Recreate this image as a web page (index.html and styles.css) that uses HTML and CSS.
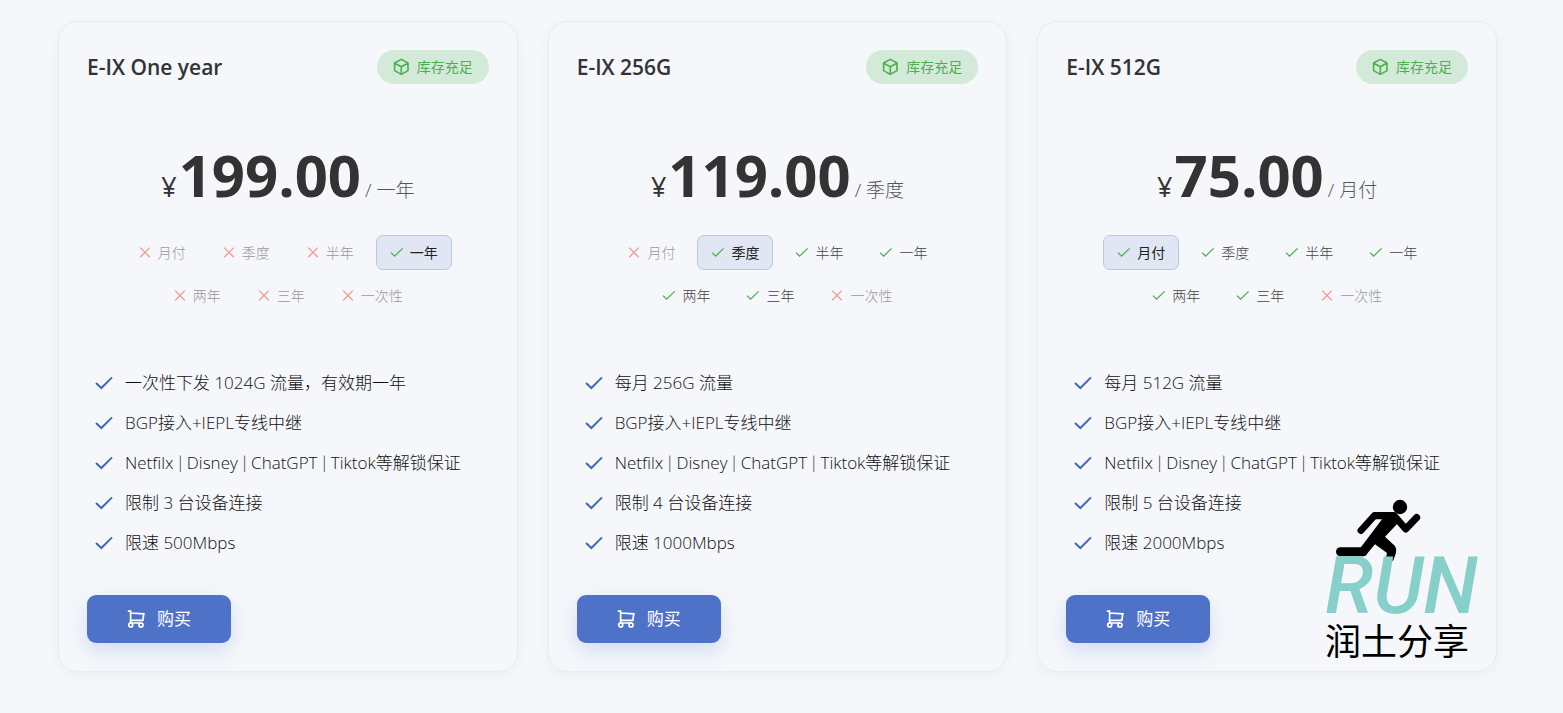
FILE: index.html
```html
<!DOCTYPE html>
<html lang="zh-CN">

<head>
    <meta charset="UTF-8">
    <meta name="viewport" content="width=device-width, initial-scale=1.0">
    <title>E-IX</title>
    <link rel="stylesheet" href="styles.css">
</head>

<body>
    <!-- shared icons -->
    <svg class="sprite" aria-hidden="true">
        <symbol id="icon-box" viewBox="0 0 18 18">
            <path d="M8.300 1.400 15 5v7.600L8.300 16.400l-6.700-3.800V5zM1.800 5.200 8.300 8.700l6.500-3.500M8.300 8.700v7.400" />
        </symbol>
        <symbol id="icon-yes" viewBox="0 0 14 14">
            <path d="M1 6.600 4.600 10.200 12.600 2.400" />
        </symbol>
        <symbol id="icon-no" viewBox="0 0 14 14">
            <path d="M2.200 1.600 11.800 11.200M11.800 1.600 2.200 11.200" />
        </symbol>
        <symbol id="icon-tick" viewBox="0 0 18 18">
            <path d="M1 9 6.400 14 17 3.400" />
        </symbol>
        <symbol id="icon-cart" viewBox="0 0 18 18">
            <path d="M.8 1.200h2.800v12M3.600 3l13.200.9-1 6.500H3.600M3.600 13h11" />
            <circle cx="3.700" cy="15" r="2" />
            <circle cx="14" cy="15" r="2" />
        </symbol>
    </svg>

    <main class="plans">
        <section class="card">
            <header class="card-header">
                <h2>E-IX One year</h2>
                <span class="stock"><svg><use href="#icon-box" /></svg>库存充足</span>
            </header>
            <div class="price"><span class="currency">¥</span><strong>199.00</strong><span class="period">/ 一年</span></div>
            <div class="periods">
                <button class="chip" disabled><svg><use href="#icon-no" /></svg>月付</button>
                <button class="chip" disabled><svg><use href="#icon-no" /></svg>季度</button>
                <button class="chip" disabled><svg><use href="#icon-no" /></svg>半年</button>
                <button class="chip active"><svg><use href="#icon-yes" /></svg>一年</button>
                <button class="chip" disabled><svg><use href="#icon-no" /></svg>两年</button>
                <button class="chip" disabled><svg><use href="#icon-no" /></svg>三年</button>
                <button class="chip" disabled><svg><use href="#icon-no" /></svg>一次性</button>
            </div>
            <ul class="features">
                <li><svg><use href="#icon-tick" /></svg>一次性下发 1024G 流量，有效期一年</li>
                <li><svg><use href="#icon-tick" /></svg>BGP接入+IEPL专线中继</li>
                <li><svg><use href="#icon-tick" /></svg><span>Netfilx<span class="sep"> | </span>Disney<span class="sep"> | </span>ChatGPT<span class="sep"> | </span>Tiktok等解锁保证</span></li>
                <li><svg><use href="#icon-tick" /></svg>限制 3 台设备连接</li>
                <li><svg><use href="#icon-tick" /></svg>限速 500Mbps</li>
            </ul>
            <button class="buy"><svg><use href="#icon-cart" /></svg>购买</button>
        </section>

        <section class="card">
            <header class="card-header">
                <h2>E-IX 256G</h2>
                <span class="stock"><svg><use href="#icon-box" /></svg>库存充足</span>
            </header>
            <div class="price"><span class="currency">¥</span><strong>119.00</strong><span class="period">/ 季度</span></div>
            <div class="periods">
                <button class="chip" disabled><svg><use href="#icon-no" /></svg>月付</button>
                <button class="chip active"><svg><use href="#icon-yes" /></svg>季度</button>
                <button class="chip"><svg><use href="#icon-yes" /></svg>半年</button>
                <button class="chip"><svg><use href="#icon-yes" /></svg>一年</button>
                <button class="chip"><svg><use href="#icon-yes" /></svg>两年</button>
                <button class="chip"><svg><use href="#icon-yes" /></svg>三年</button>
                <button class="chip" disabled><svg><use href="#icon-no" /></svg>一次性</button>
            </div>
            <ul class="features">
                <li><svg><use href="#icon-tick" /></svg>每月 256G 流量</li>
                <li><svg><use href="#icon-tick" /></svg>BGP接入+IEPL专线中继</li>
                <li><svg><use href="#icon-tick" /></svg><span>Netfilx<span class="sep"> | </span>Disney<span class="sep"> | </span>ChatGPT<span class="sep"> | </span>Tiktok等解锁保证</span></li>
                <li><svg><use href="#icon-tick" /></svg>限制 4 台设备连接</li>
                <li><svg><use href="#icon-tick" /></svg>限速 1000Mbps</li>
            </ul>
            <button class="buy"><svg><use href="#icon-cart" /></svg>购买</button>
        </section>

        <section class="card">
            <header class="card-header">
                <h2>E-IX 512G</h2>
                <span class="stock"><svg><use href="#icon-box" /></svg>库存充足</span>
            </header>
            <div class="price"><span class="currency">¥</span><strong>75.00</strong><span class="period">/ 月付</span></div>
            <div class="periods">
                <button class="chip active"><svg><use href="#icon-yes" /></svg>月付</button>
                <button class="chip"><svg><use href="#icon-yes" /></svg>季度</button>
                <button class="chip"><svg><use href="#icon-yes" /></svg>半年</button>
                <button class="chip"><svg><use href="#icon-yes" /></svg>一年</button>
                <button class="chip"><svg><use href="#icon-yes" /></svg>两年</button>
                <button class="chip"><svg><use href="#icon-yes" /></svg>三年</button>
                <button class="chip" disabled><svg><use href="#icon-no" /></svg>一次性</button>
            </div>
            <ul class="features">
                <li><svg><use href="#icon-tick" /></svg>每月 512G 流量</li>
                <li><svg><use href="#icon-tick" /></svg>BGP接入+IEPL专线中继</li>
                <li><svg><use href="#icon-tick" /></svg><span>Netfilx<span class="sep"> | </span>Disney<span class="sep"> | </span>ChatGPT<span class="sep"> | </span>Tiktok等解锁保证</span></li>
                <li><svg><use href="#icon-tick" /></svg>限制 5 台设备连接</li>
                <li><svg><use href="#icon-tick" /></svg>限速 2000Mbps</li>
            </ul>
            <button class="buy"><svg><use href="#icon-cart" /></svg>购买</button>

            <div class="watermark">
                <svg class="runner" viewBox="0 0 86 62">
                    <circle cx="64" cy="8" r="7.200" />
                    <path class="limb" d="M25 31.500 38.500 16.500H58L69.700 30 80.700 18.500" />
                    <path class="leg" d="M4.500 52.800H27" />
                    <path d="M40 13.200H58L63 23 49 37.700 59 47Q61 50 60 54L57 62 50 58.500 51 54 39 45.300 30 56Q28 57.200 26 57.200L24.500 48.700 46 20.300H37z" />
                </svg>
                <span class="watermark-run">RUN</span>
                <span class="watermark-name">润土分享</span>
            </div>
        </section>
    </main>
</body>

</html>
```
FILE: styles.css
```css
* {
    box-sizing: border-box;
}

body {
    margin: 0;
    background-color: #f5f7fb;
    color: #333;
    font-family: "Open Sans", "Noto Sans CJK SC", sans-serif;
}

svg {
    flex: none;
    fill: none;
    stroke: currentColor;
}

.sprite {
    display: none;
}

button {
    font-family: inherit;
    cursor: pointer;
}

.plans {
    display: grid;
    grid-template-columns: repeat(3, 1fr);
    gap: 30px;
    padding: 21px 66px 40px 58px;
}

.card {
    position: relative;
    padding: 28px;
    border: 1px solid #e8eaee;
    border-radius: 20px;
    box-shadow: 0 4px 16px rgba(0, 0, 0, 0.04);
}

.card-header {
    display: flex;
    justify-content: space-between;
    align-items: center;
}

.card-header h2 {
    margin: 0;
    font-size: 21px;
    font-weight: 600;
    line-height: 34px;
}

.stock {
    display: flex;
    align-items: center;
    gap: 6px;
    height: 34px;
    padding: 0 16px;
    border-radius: 17px;
    background-color: #d3ead8;
    color: #4caf50;
    font-size: 14px;
    line-height: 20px;
}

.stock svg {
    width: 18px;
    height: 18px;
    stroke-width: 1.6;
    stroke-linejoin: round;
}

.price {
    display: flex;
    justify-content: center;
    align-items: baseline;
    height: 80px;
    margin-top: 51px;
    line-height: 80px;
}

.currency {
    margin-right: 2px;
    font-size: 27px;
    font-weight: 500;
}

.price strong {
    font-size: 58px;
    font-weight: 700;
}

.period {
    margin-left: 4px;
    color: #555;
    font-size: 19px;
    font-weight: 300;
}

.periods {
    display: flex;
    flex-wrap: wrap;
    justify-content: center;
    gap: 8px;
    margin-top: 20px;
}

.chip {
    display: flex;
    align-items: center;
    gap: 6px;
    height: 35px;
    padding: 0 13px;
    border: 1px solid transparent;
    border-radius: 7px;
    background: none;
    color: #444;
    font-size: 14px;
    font-weight: 300;
    line-height: 20px;
}

.chip svg {
    width: 14px;
    height: 14px;
    color: #4caf50;
    stroke-width: 1.3;
}

.chip:disabled {
    color: #999;
    cursor: default;
}

.chip:disabled svg {
    color: #f29a94;
}

.chip.active {
    border-color: #b9c6e6;
    background-color: #e1e6f4;
    color: #222;
    font-weight: 400;
}

.features {
    display: grid;
    gap: 16px;
    margin: 58px 0 40px;
    padding: 0 0 0 8px;
    list-style: none;
    color: #111;
    font-size: 17px;
    font-weight: 300;
    line-height: 24px;
}

.features li {
    display: flex;
    align-items: center;
    gap: 12px;
    white-space: nowrap;
}

.features svg {
    width: 18px;
    height: 18px;
    color: #4169b8;
    stroke-width: 2;
}

.sep {
    font-family: Lato, sans-serif;
}

.buy {
    display: flex;
    justify-content: center;
    align-items: center;
    gap: 12px;
    width: 144px;
    height: 48px;
    border: none;
    border-radius: 9px;
    background-color: #4f72c9;
    box-shadow: 0 8px 20px rgba(79, 114, 201, 0.2);
    color: #fff;
    font-size: 17px;
    line-height: 24px;
}

.buy svg {
    width: 18px;
    height: 18px;
    stroke-width: 1.7;
}

/* logo over the corner of the last card */
.watermark {
    position: absolute;
    right: 20px;
    bottom: 9px;
    display: flex;
    flex-direction: column;
    width: 151px;
    color: #000;
}

.runner {
    width: 86px;
    height: 62px;
    margin-left: 11px;
    fill: #000;
    stroke: none;
}

.runner .limb,
.runner .leg {
    fill: none;
    stroke: #000;
    stroke-width: 7;
    stroke-linecap: round;
    stroke-linejoin: round;
}

.runner .leg {
    stroke-width: 9;
}

.watermark-run {
    margin-top: -5px;
    color: #86cfcb;
    font-family: Roboto, sans-serif;
    font-size: 79px;
    font-style: italic;
    font-weight: 500;
    line-height: 60px;
}

.watermark-name {
    font-family: "Noto Sans CJK SC", sans-serif;
    font-size: 36px;
    line-height: 46px;
}
```
